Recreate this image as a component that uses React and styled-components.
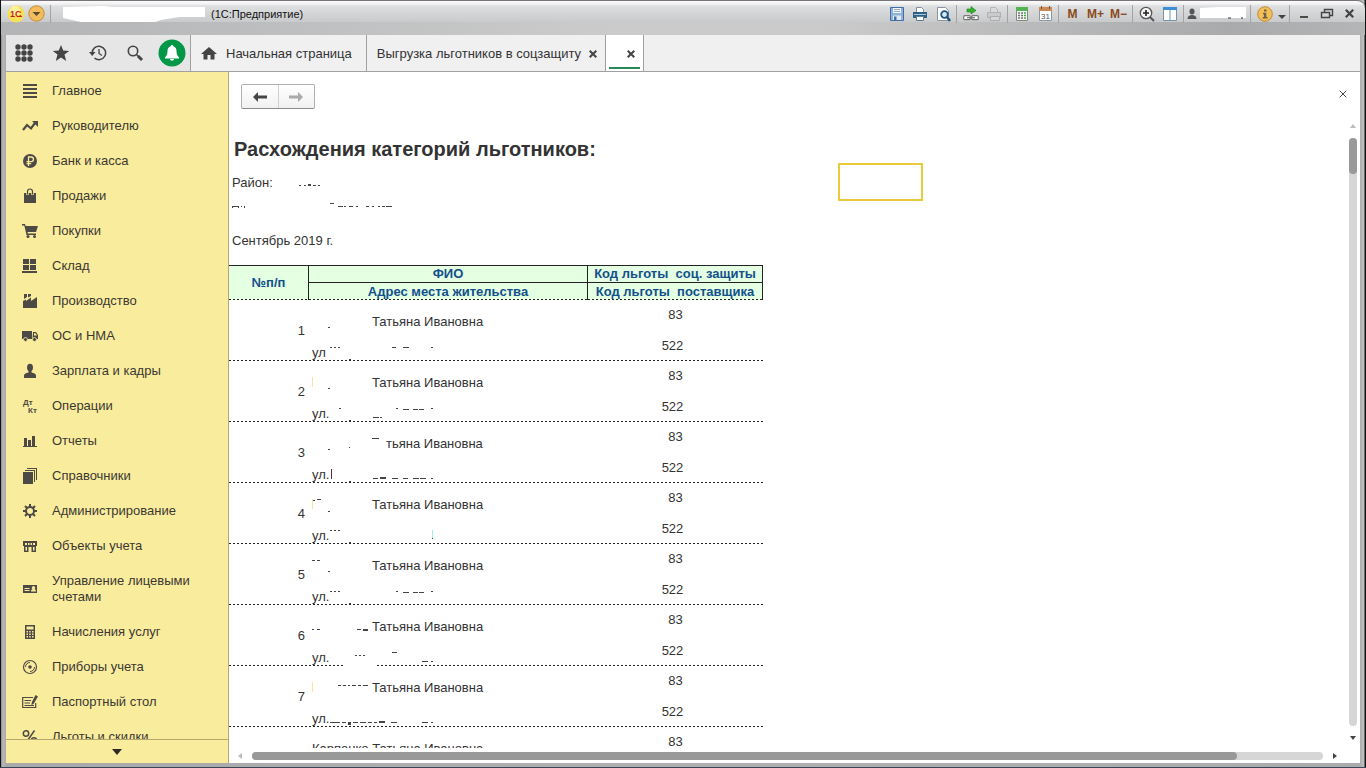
import React from 'react';
import styled, { createGlobalStyle } from 'styled-components';

const GlobalStyle = createGlobalStyle`
  * {
    box-sizing: border-box;
  }
  body {
    margin: 0;
    overflow: hidden;
    font-family: "Liberation Sans", Arial, sans-serif;
    font-size: 13px;
    line-height: 16px;
    color: #333;
  }
  button {
    font: inherit;
    color: inherit;
    background: none;
    border: 0;
    padding: 0;
  }
`;

const Window = styled.div`
  height: 100vh;
  display: flex;
  flex-direction: column;
  padding: 0 6px 4px;
  background: linear-gradient(90deg, #111 0, #111 1px, #8f8f93 1px, #b9b8bb 3px, #a9a9ab 6px, #b0b0b2 50%, #a9abad calc(100% - 6px), #c2c3c5 calc(100% - 2px), #111 calc(100% - 1px));
  border-bottom: 1px solid #3a4656;
`;

const TitleBar = styled.header`
  height: 35px;
  margin: 0 -5px;
  padding: 4px 4px 13px 6px;
  display: flex;
  align-items: center;
  justify-content: space-between;
  border-top: 1px solid #77757a;
  border-radius: 0 8px 0 0;
  background:
    linear-gradient(180deg, #fbfbfb 0, #f2f2f2 3px, #dedfe0 5px, #c9cacc 21px, transparent 21px),
    linear-gradient(90deg, #b2b4b6, #cbcbcb 45%, #cbcbcb 60%, #a9aaac 90%, #b4b5b7);
`;

const BarGroup = styled.div`
  display: flex;
  align-items: center;
`;

const BarButton = styled.button`
  width: ${({ $narrow }) => ($narrow ? '11px' : '23px')};
  height: 18px;
  display: flex;
  align-items: center;
  justify-content: center;
`;

const MemoryButton = styled(BarButton)`
  font-size: 12px;
  font-weight: bold;
  color: #8a4a1c;
`;

const Separator = styled.span`
  width: 5px;
  height: 18px;
  background: linear-gradient(90deg, transparent 2px, #a2a3a5 2px, #a2a3a5 3px, transparent 3px);
`;

const WindowTitle = styled.span`
  margin-left: 6px;
  font-size: 11px;
  color: #111;
`;

const TopPanel = styled.div`
  display: flex;
  height: 37px;
  flex: none;
  background: #f0f0f0;
  border-bottom: 1px solid #a0a0a0;
`;

const Tools = styled.div`
  display: flex;
  width: 185px;
  background: #e6e6e6;
  border-right: 1px solid #a0a0a0;
`;

const ToolButton = styled.button`
  flex: 1;
  display: flex;
  align-items: center;
  justify-content: center;
`;

const Tab = styled.div`
  display: flex;
  align-items: center;
  gap: 8px;
  padding: 2px 8px 0 10px;
  border-right: 1px solid #a0a0a0;
`;

const HomeTab = styled(Tab)`
  padding-right: 14px;
`;

const ActiveTab = styled(Tab)`
  width: 38px;
  padding: 2px 3px 0;
  gap: 0;
  background: #fff;

  &::after {
    content: '';
    flex: none;
    align-self: flex-end;
    width: 31px;
    height: 2px;
    margin: 0 0 2px -26px;
    background: #2a8a57;
  }
`;

const TabButton = styled.button`
  display: flex;
  align-items: center;
  gap: 9px;
`;

const TabClose = styled.button`
  display: flex;
  margin-left: ${({ $end }) => ($end ? '18px' : '0')};
`;

const Body = styled.div`
  flex: 1;
  min-height: 0;
  display: flex;
  background: #fff;
`;

const Sidebar = styled.nav`
  width: 223px;
  flex: none;
  display: flex;
  flex-direction: column;
  background: #faec9d;
  border-right: 1px solid #b5a76e;
`;

const Sections = styled.div`
  flex: 1;
  min-height: 0;
  overflow: hidden;
  padding-top: 2px;
`;

const SectionLink = styled.a`
  display: flex;
  align-items: center;
  gap: 14px;
  min-height: 35px;
  padding: 9px 24px 10px 16px;
  color: #3b3833;
  text-decoration: none;

  svg {
    flex: none;
  }
`;

const MoreButton = styled.button`
  height: 24px;
  display: flex;
  align-items: center;
  justify-content: center;
  border-top: 1px solid #b5a76e;
`;

const Page = styled.main`
  flex: 1;
  min-width: 0;
  display: flex;
  flex-direction: column;
`;

const PageBar = styled.div`
  display: flex;
  justify-content: space-between;
  align-items: flex-start;
  height: 48px;
  flex: none;
  padding: 12px 13px 0 12px;
`;

const History = styled.div`
  display: flex;
  height: 25px;
  width: 74px;
  border: 1px solid #b0b0b0;
  border-bottom-color: #8c8c8c;
  border-radius: 2px;
  background: linear-gradient(#fff, #f1f1f1);

  button {
    flex: 1;
    display: flex;
    align-items: center;
    justify-content: center;
  }
  button + button {
    border-left: 1px solid #d0d0d0;
  }
`;

const CloseButton = styled.button`
  display: flex;
  margin-top: 6px;
`;

const SheetArea = styled.div`
  flex: 1;
  min-height: 0;
  display: flex;
`;

const Sheet = styled.div`
  position: relative;
  flex: 1;
  min-width: 0;
  overflow: hidden;
`;

const SheetTitle = styled.h1`
  margin: 17px 0 14px 5px;
  font-size: 20px;
  line-height: 24px;
`;

const SheetLine = styled.div`
  display: flex;
  height: 16px;
  margin: 0 0 ${({ $after }) => $after}px 3px;
`;

// selected cell of the spreadsheet, lies over the sheet
const Cursor = styled.div`
  position: absolute;
  left: 609px;
  top: 43px;
  width: 85px;
  height: 38px;
  border: 2px solid #eacb3c;
`;

const dashed = 'repeating-linear-gradient(90deg, #222 0, #222 2px, transparent 2px, transparent 4px) left bottom / 100% 1px no-repeat';

const Report = styled.table`
  width: 534px;
  table-layout: fixed;
  border-collapse: separate;
  border-spacing: 0;
`;

const HeadCell = styled.th`
  height: ${({ $first }) => ($first ? '18px' : '17px')};
  padding: 0;
  line-height: 16px;
  color: #12508c;
  white-space: pre;
  border-right: 1px solid #222;
  border-top: ${({ $first }) => ($first ? '1px solid #222' : '0')};
  border-bottom: ${({ $line }) => ($line ? '1px solid #222' : '0')};
  background: ${({ $line }) => ($line ? '' : `${dashed},`)} #e4ffe2;
`;

const Row = styled.tr`
  height: 61px;
  background: ${dashed};
`;

const NumberCell = styled.td`
  padding: 0 4px 0 0;
  text-align: right;
`;

const PersonCell = styled.td`
  padding: 14px 0 1px 3px;
  vertical-align: top;
`;

const PersonLine = styled.div`
  display: flex;
  height: 15px;
  line-height: 15px;
  margin-bottom: ${({ $gap }) => ($gap ? '16px' : '0')};
`;

const Street = styled.span`
  width: 18px;
`;

const CodeCell = styled.td`
  padding: 7px 6px 0 0;
  text-align: center;
  vertical-align: top;
`;

const Code = styled.div`
  padding-left: ${({ $shift }) => ($shift ? '6px' : '0')};

  & + & {
    margin-top: 15px;
  }
`;

const VScroll = styled.div`
  width: 15px;
  display: flex;
  flex-direction: column;
  align-items: center;
  justify-content: space-between;
  padding: 4px 0 8px;
`;

const HScroll = styled.div`
  height: 15px;
  flex: none;
  display: flex;
  align-items: center;
  gap: 10px;
  padding: 0 23px 0 9px;
`;

const Track = styled.div`
  flex: 1;
  margin: ${({ $vertical }) => ($vertical ? '10px 0' : '0')};
  width: ${({ $vertical }) => ($vertical ? '8px' : 'auto')};
  height: ${({ $vertical }) => ($vertical ? 'auto' : '8px')};
  border-radius: 4px;
  background: #d6d6d6;
`;

const Thumb = styled.div`
  width: ${({ $vertical }) => ($vertical ? '8px' : '92%')};
  height: ${({ $vertical }) => ($vertical ? '36px' : '8px')};
  border-radius: 4px;
  background: #999;
`;

const Svg = ({ size = 16, children, ...rest }) => (
  <svg width={size} height={size} viewBox={`0 0 ${size} ${size}`} fill="#4d4a45" aria-hidden="true" {...rest}>
    {children}
  </svg>
);

const Triangle = ({ dir = 'down', color = '#444', width = 6 }) => {
  const w = width;
  const h = width / 2 + 1;
  const turned = dir === 'left' || dir === 'right';
  const points = {
    down: `0,0 ${w},0 ${w / 2},${h}`,
    up: `0,${h} ${w},${h} ${w / 2},0`,
    left: `${h},0 ${h},${w} 0,${w / 2}`,
    right: `0,0 0,${w} ${h},${w / 2}`,
  };
  return (
    <svg width={turned ? h : w} height={turned ? w : h} aria-hidden="true">
      <polygon points={points[dir]} fill={color} />
    </svg>
  );
};

const Cross = ({ size = 8, stroke = 2, color = '#444' }) => (
  <svg width={size} height={size} viewBox="0 0 8 8" aria-hidden="true">
    <path d="M.7.7l6.6 6.6M7.3.7L.7 7.3" stroke={color} strokeWidth={stroke} />
  </svg>
);

// leftovers of erased text: [x, y, width, height, color]
const Marks = ({ width, items = [] }) => (
  <svg width={width} height="15" overflow="visible" aria-hidden="true">
    {items.map(([x, y, w, h = 1, color = '#444'], i) => (
      <rect key={i} x={x} y={y} width={w} height={h} fill={color} />
    ))}
  </svg>
);

const icons = {
  main: <path d="M1 1h14v2H1zM1 5h14v2H1zM1 9h14v2H1zM1 13h14v2H1z" />,
  chief: (
    <>
      <path d="M1 12l4-5 4 3.5L13 5" fill="none" stroke="#4d4a45" strokeWidth="2.2" />
      <path d="M10 3h6v6z" />
    </>
  ),
  bank: (
    <>
      <circle cx="8" cy="8" r="7" />
      <path d="M6.500 13V4h2.700a2.200 2.200 0 0 1 0 4.600H4.500M4.500 10.700h4.700" fill="none" stroke="#faec9d" strokeWidth="1.300" />
    </>
  ),
  sales: (
    <>
      <path d="M2 5h12v10H2z" />
      <path d="M5.500 7V3.500a2.500 2.500 0 0 1 5 0V7" fill="none" stroke="#faec9d" strokeWidth="2.500" />
      <path d="M5.500 6.500V3.500a2.500 2.500 0 0 1 5 0v3" fill="none" stroke="#4d4a45" strokeWidth="1.200" />
    </>
  ),
  purchases: (
    <>
      <path d="M0 1h3l.7 2H16l-2 6H5.500l.3 1.500H14V12H4.500L2.300 2.500H0z" />
      <circle cx="6" cy="13.500" r="1.500" />
      <circle cx="12.500" cy="13.500" r="1.500" />
    </>
  ),
  stock: <path d="M1 1h6v5H1zM8 1h6v5H8zM1 7h6v5H1zM8 7h6v5H8zM0 13h15v2H0z" />,
  production: <path d="M1 15V8l3-1.500V8l5-3.500V8l6-4v11zM2 1h3v3L2 6zM6 1h3v2L6 4.500z" />,
  assets: (
    <>
      <path d="M0 3h10v8H0zM11 4h3l2 3v4h-5.500z" />
      <path d="M12 5.200h1.500L15 7.500h-3z" fill="#faec9d" />
      <circle cx="3.500" cy="11.500" r="2" stroke="#faec9d" strokeWidth=".8" />
      <circle cx="12.500" cy="11.500" r="2" stroke="#faec9d" strokeWidth=".8" />
    </>
  ),
  salary: (
    <>
      <ellipse cx="8" cy="4.500" rx="3" ry="3.800" />
      <path d="M6.500 7h3v2.500c3 .5 4.500 1.500 4.500 3V15H2v-2.500c0-1.500 1.500-2.500 4.500-3z" />
    </>
  ),
  operations: (
    <g fontSize="8" fontWeight="bold" fontFamily="Liberation Sans, Arial, sans-serif">
      <text x="1" y="7">Дт</text>
      <text x="6" y="15">Кт</text>
    </g>
  ),
  reports: <path d="M1 13h14v1H1zM2 5h3v8H2zM6 7h3v6H6zM10 3h3v10h-3z" />,
  catalogs: <path d="M1 4h10v12H1zM3 2h10v12h-1V3H3zM5 0h10v12h-1V1H5z" />,
  admin: (
    <>
      <circle cx="8" cy="8" r="4" fill="none" stroke="#4d4a45" strokeWidth="2" />
      <path d="M8 1v3M8 12v3M1 8h3M12 8h3M3 3l2 2M11 11l2 2M3 13l2-2M11 5l2-2" stroke="#4d4a45" strokeWidth="2" />
    </>
  ),
  objects: (
    <>
      <path d="M1 3h14v5h-1v6H9.500V9h-3v5H2V8H1z" />
      <path d="M3.500 9h1.500v3.500H3.500zM11 9h1.500v3.500H11zM3 5h2v2H3zM6 5h1.500v2H6zM8.500 5H10v2H8.500zM11 5h2v2h-2z" fill="#faec9d" />
    </>
  ),
  accounts: (
    <>
      <path d="M1 4h14v8H1z" />
      <path d="M2.500 7h5v1h-5zM2.500 9h5v1h-5zM9 10.500c0-1.500.8-2 1.500-2.200a1.700 1.700 0 1 1 2 0c.7.2 1.500.7 1.500 2.200z" fill="#faec9d" />
    </>
  ),
  charges: (
    <>
      <path d="M3 1h10v14H3z" />
      <path d="M4.500 2.500h7v3h-7zM4.500 7h1.500v1.500H4.500zM7.200 7h1.500v1.500H7.200zM10 7h1.500v1.500H10zM4.500 9.500h1.500V11H4.500zM7.200 9.500h1.500V11H7.200zM10 9.500h1.500V11H10zM4.500 12h1.500v1.500H4.500zM7.200 12h1.500v1.500H7.200zM10 12h1.500v1.500H10z" fill="#faec9d" />
    </>
  ),
  meters: (
    <g fill="none" stroke="#4d4a45">
      <circle cx="8" cy="8" r="6.500" strokeWidth="1.200" />
      <circle cx="8" cy="8" r="1.800" fill="#4d4a45" stroke="none" />
      <path d="M3.500 8A4.500 4.500 0 0 1 8 3.500M12.500 8A4.500 4.500 0 0 1 8 12.500" />
    </g>
  ),
  passport: (
    <>
      <path d="M11 3.500H.7v10h13V9" fill="none" stroke="#4d4a45" strokeWidth="1.200" />
      <path d="M2.500 6H9v1H2.500zM2.500 8.500H8v1H2.500zM2.500 11H12v1H2.500zM13.500 1L16 2.500 11.500 10 9.500 11l.2-2.500z" />
    </>
  ),
  benefits: (
    <g fill="none" stroke="#4d4a45" strokeWidth="1.500">
      <circle cx="4" cy="4.500" r="2.700" />
      <circle cx="12" cy="11.500" r="2.700" />
      <path d="M12.500 1.500l-9 13" />
    </g>
  ),
};

const sections = [
  ['main', 'Главное'],
  ['chief', 'Руководителю'],
  ['bank', 'Банк и касса'],
  ['sales', 'Продажи'],
  ['purchases', 'Покупки'],
  ['stock', 'Склад'],
  ['production', 'Производство'],
  ['assets', 'ОС и НМА'],
  ['salary', 'Зарплата и кадры'],
  ['operations', 'Операции'],
  ['reports', 'Отчеты'],
  ['catalogs', 'Справочники'],
  ['admin', 'Администрирование'],
  ['objects', 'Объекты учета'],
  ['accounts', 'Управление лицевыми счетами'],
  ['charges', 'Начисления услуг'],
  ['meters', 'Приборы учета'],
  ['passport', 'Паспортный стол'],
  ['benefits', 'Льготы и скидки'],
];

const sh = [[0, 2, 2], [4, 2, 2], [8, 2, 2]];
const house = [[66, 2, 2], [73, 3, 6], [83, 3, 5], [89, 3, 5], [101, 2, 2]];
const tail = [19, 14, 2];
const edge = [0, 2, 1, 10, '#f3e7a0'];

const rows = [
  { name: [[16, 13, 2]], street: 'ул', address: [...sh, [62, 2, 4], [73, 2, 6], [101, 2, 2], tail] },
  { name: [edge, [16, 13, 2]], address: [[9, 2, 2], ...house, [43, 11, 6], [50, 11, 2], tail] },
  {
    name: [[16, 13, 2], [37, 11, 1], [60, 2, 7]],
    person: 'тьяна Ивановна',
    address: [[1, 2, 1, 10, '#6a3030'], [43, 11, 5], [50, 10, 6, 2], [62, 11, 6], [73, 11, 5], [83, 11, 6], [90, 11, 6], [101, 11, 2], tail],
  },
  { name: [edge, [1, 3, 2], [5, 2, 4], [16, 14, 2]], address: [...sh, tail, [102, 2, 1, 8, '#a5ecf5'], [102, 10, 1]] },
  { name: [[0, 2, 3], [5, 2, 3], [16, 13, 2]], address: [...sh, ...house, tail] },
  {
    name: [[0, 10, 2], [5, 10, 3], [45, 10, 4], [51, 10, 5, 2]],
    address: [[25, 5, 2], [29, 5, 2], [33, 5, 2], [62, 2, 5], [92, 11, 6], [101, 11, 2], [14, 14, 33, 3, '#fff']],
  },
  {
    name: [edge, [26, 5, 3], [31, 5, 3], [36, 5, 2], [40, 5, 4], [46, 5, 3], [51, 5, 5]],
    address: [[0, 11, 10], [12, 11, 4], [18, 11, 3, 3], [23, 11, 5], [30, 11, 6], [38, 11, 4], [44, 11, 3], [49, 10, 6, 2], [61, 11, 6], [92, 11, 6], [101, 11, 2]],
  },
  { person: 'Карпенко Татьяна Ивановна', last: true },
];

function Title() {
  return (
    <TitleBar>
      <BarGroup>
        <svg width="18" height="18" aria-label="1С">
          <circle cx="9" cy="9" r="8.500" fill="#f8e154" />
          <circle cx="8" cy="6" r="5" fill="#fff3a0" />
          <text x="3" y="12" fontSize="9" fontWeight="bold" fill="#d0211c">1С</text>
          <path d="M10 11.500h5" stroke="#d0211c" />
        </svg>
        <BarButton aria-label="Меню">
          <svg width="17" height="17">
            <circle cx="8.500" cy="8.500" r="7.700" fill="#f4bd5c" stroke="#c08a3a" />
            <path d="M4.500 7h8l-4 4z" fill="#5a4a30" />
          </svg>
        </BarButton>
        <Separator />
        <svg width="152" height="18" aria-hidden="true">
          <path d="M10 2l40-1 10 1h92v10h-26l-18 3-6 2H28L10 13z" fill="#fff" />
        </svg>
        <WindowTitle>(1С:Предприятие)</WindowTitle>
      </BarGroup>
      <BarGroup>
        <BarButton aria-label="Сохранить">
          <Svg>
            <path d="M1.500 1.500h13v13h-13z" fill="#8fb2da" stroke="#3f6ea8" />
            <path d="M4 2h8v5H4z" fill="#f4f7fb" />
            <path d="M5 3.500h6M5 5.500h6" stroke="#9ab" />
            <path d="M4 9.500h8V14H4z" fill="#e3e9f0" />
            <path d="M5 10.500h2.500V14H5z" fill="#3f6ea8" />
          </Svg>
        </BarButton>
        <BarButton aria-label="Печать">
          <Svg>
            <path d="M4.500 6V1.500h5l2 2V6" fill="#fff" stroke="#7b8ea3" />
            <path d="M1 6h14v6H1z" fill="#2e5f86" />
            <path d="M2 8h12v1H2z" fill="#a9c8dd" />
            <path d="M4.500 10.500h7v4h-7z" fill="#fff" stroke="#5f7e98" />
          </Svg>
        </BarButton>
        <BarButton aria-label="Просмотр">
          <Svg>
            <path d="M2.500 1.500h8l3 3v10h-11z" fill="#fff" stroke="#8795a5" />
            <circle cx="9.500" cy="8.500" r="3.300" fill="#d8ecf7" stroke="#1c5580" strokeWidth="1.800" />
            <path d="M12 11l3 4" stroke="#1c5580" strokeWidth="2.500" />
          </Svg>
        </BarButton>
        <Separator />
        <BarButton aria-label="Получить ссылку">
          <Svg>
            <path d="M4 3h4V.5L13 4.500 8 8V6H4z" fill="#35b22c" stroke="#1f7d1c" strokeWidth=".6" />
            <rect x=".7" y="9.700" width="6.600" height="4" rx="1" fill="#fff" stroke="#777" strokeWidth="1.200" />
            <rect x="8.700" y="9.700" width="6.600" height="4" rx="1" fill="#fff" stroke="#777" strokeWidth="1.200" />
            <path d="M4 11.700h8" stroke="#777" strokeWidth="1.300" />
          </Svg>
        </BarButton>
        <BarButton aria-label="Перейти по ссылке" disabled>
          <Svg opacity=".6">
            <path d="M4.500 6V1.500h5l2 2V6" fill="#ddd" stroke="#999" />
            <path d="M1.500 6.500h13v5h-13z" fill="#c4c6c8" stroke="#999" />
            <path d="M4.500 10.500h9v4h-9z" fill="#ddd" stroke="#999" />
          </Svg>
        </BarButton>
        <Separator />
        <BarButton aria-label="Калькулятор">
          <Svg>
            <path d="M2.500 1.500h11v13h-11z" fill="#f4f4f4" stroke="#808a80" />
            <path d="M2 1h12v4H2z" fill="#55b356" />
            <path d="M4 7h2M7 7h2M4 9.500h2M7 9.500h2M4 12h2M7 12h2" stroke="#6c7a6c" strokeWidth="1.300" />
            <path d="M10 7h2M10 9.500h2M10 12h2" stroke="#4da44e" strokeWidth="1.300" />
          </Svg>
        </BarButton>
        <BarButton aria-label="Календарь">
          <Svg>
            <path d="M2.500 2.500h12v12h-12z" fill="#fff" stroke="#8e99a6" />
            <path d="M2 1h13v4H2z" fill="#c88a58" />
            <path d="M4.500 0v3M12.500 0v3" stroke="#8b4f24" />
            <text x="4" y="13" fontSize="8" fill="#555">31</text>
          </Svg>
        </BarButton>
        <Separator />
        <MemoryButton>M</MemoryButton>
        <MemoryButton>M+</MemoryButton>
        <MemoryButton>M−</MemoryButton>
        <Separator />
        <BarButton aria-label="Масштаб">
          <Svg>
            <circle cx="7" cy="7" r="5.700" fill="#f4f4f4" stroke="#555" strokeWidth="1.300" />
            <path d="M4 7h6M7 4v6" stroke="#222" strokeWidth="1.600" />
            <path d="M11 11l4 4" stroke="#555" strokeWidth="2" />
          </Svg>
        </BarButton>
        <BarButton aria-label="Панели">
          <Svg>
            <path d="M1.500 1.500h13v13h-13z" fill="#fff" stroke="#6f94b5" />
            <path d="M1 1h14v3H1z" fill="#3d8fd6" />
            <path d="M8 4v11" stroke="#6f94b5" />
          </Svg>
        </BarButton>
        <Separator />
        <BarButton $narrow aria-label="Пользователь">
          <svg width="10" height="12">
            <ellipse cx="5" cy="3.500" rx="2.500" ry="3" fill="#555" />
            <path d="M.5 11c0-3 2-4 4.500-4s4.500 1 4.500 4z" fill="#555" />
          </svg>
        </BarButton>
        <svg width="51" height="14" aria-hidden="true">
          <path d="M3 1l19-1h27v11H3z" fill="#fff" />
          <path d="M31 11h3M44 11h2" stroke="#333" />
        </svg>
        <Separator />
        <BarButton aria-label="Справка">
          <Svg>
            <circle cx="8" cy="8" r="7.300" fill="#f3bf57" stroke="#c08a3a" />
            <path d="M7 3.500h2.500v2H7zM6 6.700h3.300v4.300h1.200v1.500H5.700V11h1.200V8.200H6z" fill="#6e6048" />
          </Svg>
        </BarButton>
        <BarButton $narrow aria-label="Ещё">
          <svg width="8" height="12"><path d="M0 7h8l-4 4z" fill="#444" /></svg>
        </BarButton>
        <Separator />
        <BarButton aria-label="Свернуть">
          <Svg><path d="M4 10h8v2H4z" /></Svg>
        </BarButton>
        <BarButton aria-label="Восстановить">
          <Svg>
            <path d="M5.500 6V3.500h8v6H11" fill="none" stroke="#444" strokeWidth="1.400" />
            <path d="M2.500 6.500h8v5h-8z" fill="none" stroke="#444" strokeWidth="1.400" />
          </Svg>
        </BarButton>
        <BarButton aria-label="Закрыть"><Cross size={9} stroke={2} /></BarButton>
      </BarGroup>
    </TitleBar>
  );
}

function Panel() {
  return (
    <TopPanel>
      <Tools>
        <ToolButton aria-label="Меню функций">
          <Svg size={18}>
            {[3, 9, 15].map((y) => [3, 9, 15].map((x) => <circle key={`${x}-${y}`} cx={x} cy={y} r="2.700" fill="#444" />))}
          </Svg>
        </ToolButton>
        <ToolButton aria-label="Избранное">
          <Svg size={18}>
            <path d="M9 1l2.200 5.600 6 .3-4.700 3.700L14.200 17 9 13.400 3.800 17l1.700-6.400L.8 6.900l6-.3z" fill="#444" />
          </Svg>
        </ToolButton>
        <ToolButton aria-label="История">
          <Svg size={18}>
            <path d="M3.200 9A6.700 6.700 0 1 1 5.500 14" fill="none" stroke="#444" strokeWidth="1.500" />
            <path d="M0 8h6.500l-3.300 4z" fill="#444" />
            <path d="M10 5v4.500l3 2" fill="none" stroke="#444" strokeWidth="1.300" />
          </Svg>
        </ToolButton>
        <ToolButton aria-label="Поиск">
          <Svg size={18}>
            <circle cx="7" cy="7" r="4.700" fill="none" stroke="#444" strokeWidth="1.600" />
            <path d="M10.500 10.500l2 2" stroke="#444" strokeWidth="1.500" />
            <path d="M12 12l4 4" stroke="#444" strokeWidth="3" />
          </Svg>
        </ToolButton>
        <ToolButton aria-label="Оповещения">
          <Svg size={28}>
            <circle cx="14" cy="14" r="13.500" fill="#009846" />
            <path d="M14 6c1 0 1.300.6 1.300 1.300 2.200.6 3.200 2.300 3.200 4.700 0 3 .8 4.500 2.500 6.500v1H7v-1c1.700-2 2.500-3.500 2.500-6.500 0-2.400 1-4.100 3.200-4.700C12.700 6.600 13 6 14 6zM12 20h4c0 1-.8 1.700-2 1.700s-2-.7-2-1.700z" fill="#fff" />
          </Svg>
        </ToolButton>
      </Tools>
      <HomeTab>
        <TabButton>
          <Svg>
            <path d="M8 1l8 7h-2.500v5.500h-4V9h-3v4.500h-4V8H0z" fill="#444" />
          </Svg>
          Начальная страница
        </TabButton>
      </HomeTab>
      <Tab>
        <TabButton>Выгрузка льготников в соцзащиту</TabButton>
        <TabClose aria-label="Закрыть вкладку"><Cross /></TabClose>
      </Tab>
      <ActiveTab>
        <TabClose $end aria-label="Закрыть вкладку"><Cross /></TabClose>
      </ActiveTab>
    </TopPanel>
  );
}

function ReportTable() {
  return (
    <Report>
      <colgroup>
        <col width="80" />
        <col width="279" />
        <col width="175" />
      </colgroup>
      <thead>
        <tr>
          <HeadCell $first rowSpan={2}>№п/п</HeadCell>
          <HeadCell $first $line>ФИО</HeadCell>
          <HeadCell $first $line>{'Код льготы  соц. защиты'}</HeadCell>
        </tr>
        <tr>
          <HeadCell>Адрес места жительства</HeadCell>
          <HeadCell>{'Код льготы  поставщика'}</HeadCell>
        </tr>
      </thead>
      <tbody>
        {rows.map((row, i) => (
          <Row key={i}>
            <NumberCell>{row.last ? '' : i + 1}</NumberCell>
            <PersonCell>
              <PersonLine $gap>
                {row.name && <Marks width={row.person ? 74 : 60} items={row.name} />}
                {row.person || 'Татьяна Ивановна'}
              </PersonLine>
              {row.address && (
                <PersonLine>
                  <Street>{row.street || 'ул.'}</Street>
                  <Marks width={110} items={row.address} />
                </PersonLine>
              )}
            </PersonCell>
            <CodeCell>
              <Code $shift>83</Code>
              {!row.last && <Code>522</Code>}
            </CodeCell>
          </Row>
        ))}
      </tbody>
    </Report>
  );
}

function App() {
  return (
    <Window>
      <GlobalStyle />
      <Title />
      <Panel />
      <Body>
        <Sidebar>
          <Sections>
            {sections.map(([icon, label]) => (
              <SectionLink href="#" key={icon}>
                <Svg>{icons[icon]}</Svg>
                {label}
              </SectionLink>
            ))}
          </Sections>
          <MoreButton aria-label="Ещё разделы"><Triangle width={10} color="#2e2b24" /></MoreButton>
        </Sidebar>
        <Page>
          <PageBar>
            <History>
              <button aria-label="Назад">
                <svg width="14" height="10"><path d="M0 5l5-5v3.500h9v3H5V10z" fill="#444" /></svg>
              </button>
              <button aria-label="Вперед">
                <svg width="14" height="10"><path d="M14 5L9 0v3.500H0v3h9V10z" fill="#aaa" /></svg>
              </button>
            </History>
            <CloseButton aria-label="Закрыть"><Cross stroke={1} /></CloseButton>
          </PageBar>
          <SheetArea>
            <Sheet>
              <SheetTitle>Расхождения категорий льготников:</SheetTitle>
              <SheetLine $after={8}>
                Район:
                <Marks width={80} items={[[26, 10, 2], [31, 10, 2], [35, 9, 3, 2], [40, 10, 3], [45, 10, 2]]} />
              </SheetLine>
              <SheetLine $after={18}>
                <Marks
                  width={170}
                  items={[[0, 7, 7], [0, 8, 1], [6, 8, 1], [9, 7, 1], [12, 7, 1, 2], [98, 4, 4], [106, 7, 5], [112, 7, 2], [117, 7, 4], [124, 7, 2], [134, 7, 3], [140, 7, 2], [146, 7, 2], [150, 7, 3], [154, 7, 6]]}
                />
              </SheetLine>
              <SheetLine $after={16}>Сентябрь 2019 г.</SheetLine>
              <ReportTable />
              <Cursor />
            </Sheet>
            <VScroll>
              <Triangle dir="up" color="#bbb" />
              <Track $vertical><Thumb $vertical /></Track>
              <Triangle />
            </VScroll>
          </SheetArea>
          <HScroll>
            <Triangle dir="left" color="#bbb" />
            <Track><Thumb /></Track>
            <Triangle dir="right" />
          </HScroll>
        </Page>
      </Body>
    </Window>
  );
}

export default App;
